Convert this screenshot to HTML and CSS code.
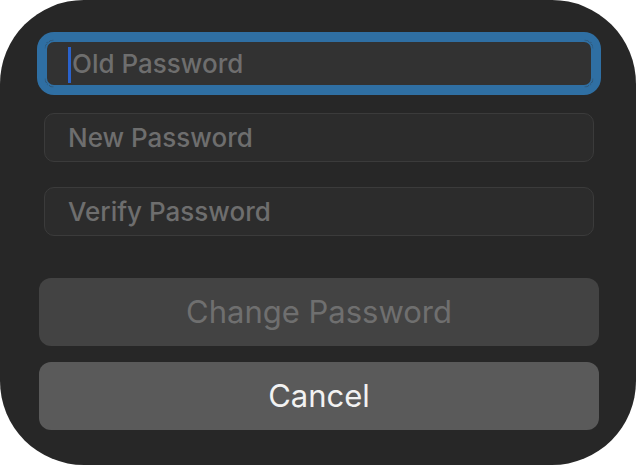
FILE: index.html
```html
<!DOCTYPE html>
<html lang="en">
<head>
  <meta charset="UTF-8">
  <meta name="viewport" content="width=device-width, initial-scale=1.0">
  <title>Change Password</title>
  <link rel="stylesheet" href="styles.css">
</head>
<body>
  <div class="panel">
    <div class="fields">
      <div class="field focused"><span class="caret"></span><span class="placeholder">Old Password</span></div>
      <div class="field"><span class="placeholder">New Password</span></div>
      <div class="field"><span class="placeholder">Verify Password</span></div>
    </div>

    <div class="buttons">
      <button class="btn disabled">Change Password</button>
      <button class="btn">Cancel</button>
    </div>
  </div>
</body>
</html>
```

FILE: styles.css
```css
html, body {
  margin: 0;
  padding: 0;
  background: #fff;
}
body {
  font-family: Inter, 'Liberation Sans', sans-serif;
  width: 636px;
  height: 465px;
  overflow: hidden;
}
.panel {
  box-sizing: border-box;
  width: 636px;
  height: 465px;
  background: #272727;
  border-radius: 84px;
  padding: 39px 37px 0 39px;
}
.fields {
  display: flex;
  flex-direction: column;
  gap: 25px;
  margin: 0 5px;
}
.field {
  box-sizing: border-box;
  height: 49px;
  display: flex;
  align-items: center;
  padding-left: 23px;
  background: #2c2c2c;
  border: 1px solid #3b3b3b;
  border-radius: 10px;
  font-size: 26px;
  font-weight: 500;
  color: #6e6e6e;
}
.field.focused {
  background: #323232;
  border-color: #2f6fa3;
  box-shadow: 0 0 0 7px #2f6fa3, inset 0 0 0 2px #2f6fa3;
  padding-left: 22px;
}
.caret {
  display: inline-block;
  width: 3px;
  height: 36px;
  margin: 3px 1px 0 1px;
  background: #2a62cc;
}
.buttons {
  display: flex;
  flex-direction: column;
  gap: 16px;
  margin-top: 42px;
}
.btn {
  height: 68px;
  padding-bottom: 2px;
  border: none;
  border-radius: 12px;
  background: #5a5a5a;
  color: #f2f2f2;
  font-family: Inter, 'Liberation Sans', sans-serif;
  font-size: 31px;
  cursor: pointer;
}
.btn.disabled {
  background: #434343;
  color: #6f6f6f;
}
```
